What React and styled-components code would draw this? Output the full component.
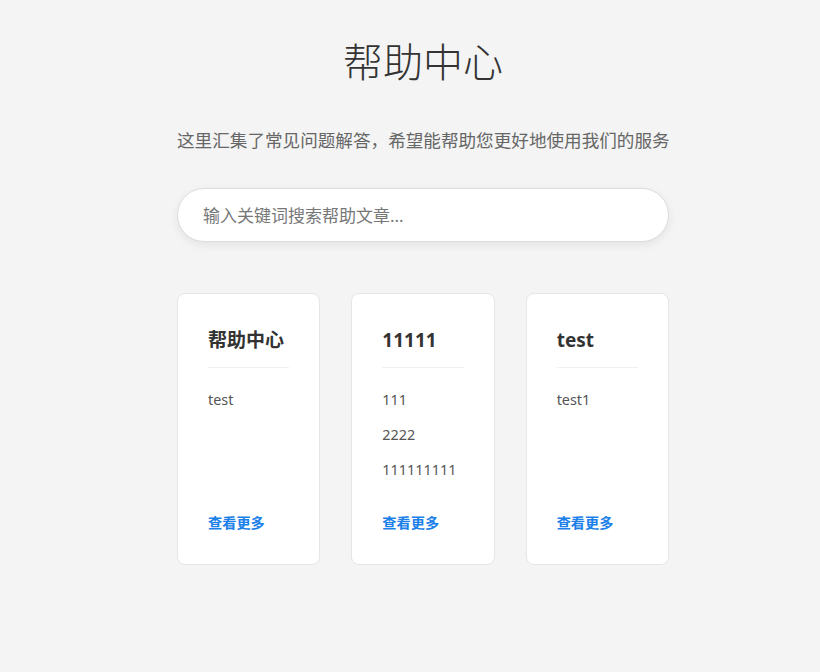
import styled, { createGlobalStyle } from "styled-components";

const GlobalStyle = createGlobalStyle`
  body {
    margin: 0;
    background: #f4f4f4;
    font-family: "Noto Sans", "Noto Sans CJK SC", sans-serif;
  }
`;

const Page = styled.div`
  padding: 38px 0 40px 26px;
  min-height: 100vh;
  box-sizing: border-box;
`;

const Wrapper = styled.div`
  max-width: 492px;
  margin: 0 auto;
`;

const Title = styled.h1`
  margin: 0;
  text-align: center;
  font-size: 40px;
  line-height: 48px;
  font-weight: 300;
  color: #333;
`;

const Subtitle = styled.p`
  margin: 41px 0 0;
  text-align: center;
  font-size: 17.6px;
  line-height: 26px;
  color: #666;
  white-space: nowrap;
`;

const SearchInput = styled.input`
  display: block;
  width: 100%;
  height: 54px;
  margin-top: 35px;
  box-sizing: border-box;
  padding: 0 25px;
  border: 1px solid #dcdcdc;
  border-radius: 27px;
  background: #fff;
  box-shadow: 0 3px 10px rgba(0, 0, 0, 0.07);
  font-family: inherit;
  font-size: 17px;
  color: #333;
  outline: none;

  &::placeholder {
    color: #777;
  }
`;

const CardGrid = styled.div`
  display: grid;
  grid-template-columns: repeat(3, 1fr);
  gap: 31px;
  margin-top: 51px;
`;

const Card = styled.div`
  display: flex;
  flex-direction: column;
  background: #fff;
  border: 1px solid #e6e6e6;
  border-radius: 8px;
  padding: 30px;
`;

const CardTitle = styled.h3`
  margin: 0;
  padding-bottom: 11px;
  border-bottom: 1px solid #f0f0f0;
  font-size: 19px;
  line-height: 32px;
  font-weight: 700;
  color: #333;
`;

const ItemList = styled.ul`
  list-style: none;
  margin: 21px 0 31px;
  padding: 0;
  display: flex;
  flex-direction: column;
  gap: 13px;
`;

const Item = styled.li`
  font-size: 14.4px;
  line-height: 22px;
  color: #555;
`;

const MoreLink = styled.a`
  margin-top: auto;
  font-size: 14.2px;
  line-height: 22px;
  font-weight: 700;
  color: #1a7fe8;
  text-decoration: none;
  cursor: pointer;
`;

const sections = [
  { title: "帮助中心", items: ["test"] },
  { title: "11111", items: ["111", "2222", "111111111"] },
  { title: "test", items: ["test1"] },
];

const App = () => {
  return (
    <Page>
      <GlobalStyle />
      <Wrapper>
        <Title>帮助中心</Title>
        <Subtitle>这里汇集了常见问题解答，希望能帮助您更好地使用我们的服务</Subtitle>
        <SearchInput type="text" placeholder="输入关键词搜索帮助文章..." />
        <CardGrid>
          {sections.map((sec) => (
            <Card key={sec.title}>
              <CardTitle>{sec.title}</CardTitle>
              <ItemList>
                {sec.items.map((it) => (
                  <Item key={it}>{it}</Item>
                ))}
              </ItemList>
              <MoreLink>查看更多</MoreLink>
            </Card>
          ))}
        </CardGrid>
      </Wrapper>
    </Page>
  );
};

export default App;
